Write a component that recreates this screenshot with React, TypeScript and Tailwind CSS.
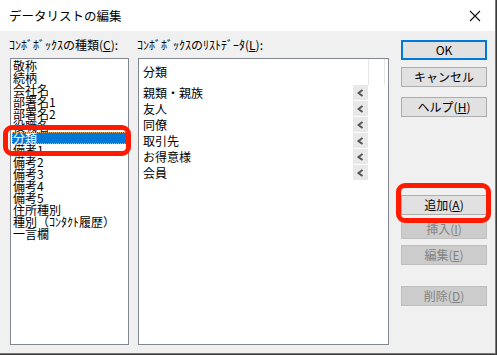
import React from "react";

const font = { fontFamily: '"Noto Sans CJK JP", "Noto Sans", sans-serif' };

const kinds = [
    "敬称",
    "続柄",
    "会社名",
    "部署名1",
    "部署名2",
    "役職名",
    "分類",
    "備考1",
    "備考2",
    "備考3",
    "備考4",
    "備考5",
    "住所種別",
    "種別（ｺﾝﾀｸﾄ履歴）",
    "一言欄",
];

const items = ["親類・親族", "友人", "同僚", "取引先", "お得意様", "会員"];

const Btn: React.FC<{ label: string; mn?: string; disabled?: boolean; primary?: boolean; className?: string }> = ({
    label, mn, disabled, primary, className,
}) => {
    const base = disabled
        ? "bg-[#cccccc] border border-[#bfbfbf] text-[#838383]"
        : primary
            ? "bg-[#e1e1e1] border-2 border-[#0078d7] text-black"
            : "bg-[#e1e1e1] border border-[#adadad] text-black";
    return (
        <div className={`w-[86px] h-[20px] flex items-center justify-center text-[12px] leading-[12px] ${base} ${className ?? ""}`}>
            <span>
                {label}
                {mn && (
                    <>
                        (<u>{mn}</u>)
                    </>
                )}
            </span>
        </div>
    );
};

const Arrow = () => (
    <div className="w-[15px] h-[15px] bg-[#e8e8e8] flex items-center justify-center">
        <svg width="7" height="8" viewBox="0 0 7 8">
            <polyline points="5.5,1 1.5,4 5.5,7" fill="none" stroke="#555" strokeWidth="2" />
        </svg>
    </div>
);

export default function App() {
    return (
        <div className="w-[497px] h-[355px] bg-[#3a3a3a] overflow-hidden" style={font}>
            <div className="relative w-[496px] h-[354px] bg-[#f0f0f0] border-r border-b border-[#7a7a7a] flex flex-col">
                {/* title bar */}
                <div className="h-[31px] bg-white flex items-center justify-between pl-[9px] pr-[10px] shrink-0">
                    <span className="text-[12.5px] leading-[13px] text-black">データリストの編集</span>
                    <svg width="12" height="12" viewBox="0 0 12 12" className="mr-[4px]">
                        <path d="M1 1 L11 11 M11 1 L1 11" stroke="#111" strokeWidth="1.1" />
                    </svg>
                </div>

                {/* body */}
                <div className="flex flex-row pl-[10px] text-[12px] text-black">
                    {/* kinds column */}
                    <div className="flex flex-col w-[119px]">
                        <div className="h-[27px] pt-[8px] leading-[12px] -ml-[1px] whitespace-nowrap">
                            ｺﾝﾎﾞﾎﾞｯｸｽの種類(<u>C</u>):
                        </div>
                        <div className="h-[287px] bg-white border border-[#828790] pt-[1px] px-[1px]">
                            {kinds.map((k) => (
                                <div
                                    key={k}
                                    className={`h-[12px] leading-[12px] pl-[1px] whitespace-nowrap ${
                                        k === "分類" ? "bg-[#0078d7] text-white outline-1 outline-dotted outline-[#f0b060] -outline-offset-1" : ""
                                    }`}
                                >
                                    {k}
                                </div>
                            ))}
                        </div>
                    </div>

                    {/* list data column */}
                    <div className="flex flex-col w-[251px] ml-[9px]">
                        <div className="h-[27px] pt-[8px] leading-[12px] -ml-[1px] whitespace-nowrap">
                            ｺﾝﾎﾞﾎﾞｯｸｽのﾘｽﾄﾃﾞｰﾀ(<u>L</u>):
                        </div>
                        <div className="h-[287px] bg-white border border-[#828790] flex flex-col">
                            <div className="h-[26px] flex flex-row shrink-0">
                                <div className="w-[230px] pl-[4px] flex items-center border-r border-[#e5e5e5] leading-[12px]">分類</div>
                                <div className="w-[16px] border-r border-[#e5e5e5]"></div>
                            </div>
                            {items.map((it) => (
                                <div key={it} className="h-[16px] flex flex-row items-start">
                                    <div className="w-[214px] pl-[4px] h-[15px] flex items-center leading-[12px] whitespace-nowrap">{it}</div>
                                    <Arrow />
                                </div>
                            ))}
                        </div>
                    </div>

                    {/* buttons */}
                    <div className="relative flex flex-col ml-[12px] pt-[9px]">
                        <Btn label="OK" primary />
                        <Btn label="キャンセル" className="mt-[7px]" />
                        <Btn label="ヘルプ" mn="H" className="mt-[10px]" />
                        <Btn label="追加" mn="A" className="mt-[78px]" />
                        <Btn label="挿入" mn="I" disabled className="mt-[4px]" />
                        <Btn label="編集" mn="E" disabled className="mt-[6px]" />
                        <Btn label="削除" mn="D" disabled className="mt-[21px]" />
                    </div>
                </div>

                {/* annotation highlights */}
                <div className="absolute left-[3px] top-[125px] w-[128px] h-[31px] border-[5px] border-[#ff1a00] rounded-[9px]"></div>
                <div className="absolute left-[396px] top-[183px] w-[95px] h-[40px] border-[5px] border-[#ff1a00] rounded-[9px]"></div>
            </div>
        </div>
    );
}
